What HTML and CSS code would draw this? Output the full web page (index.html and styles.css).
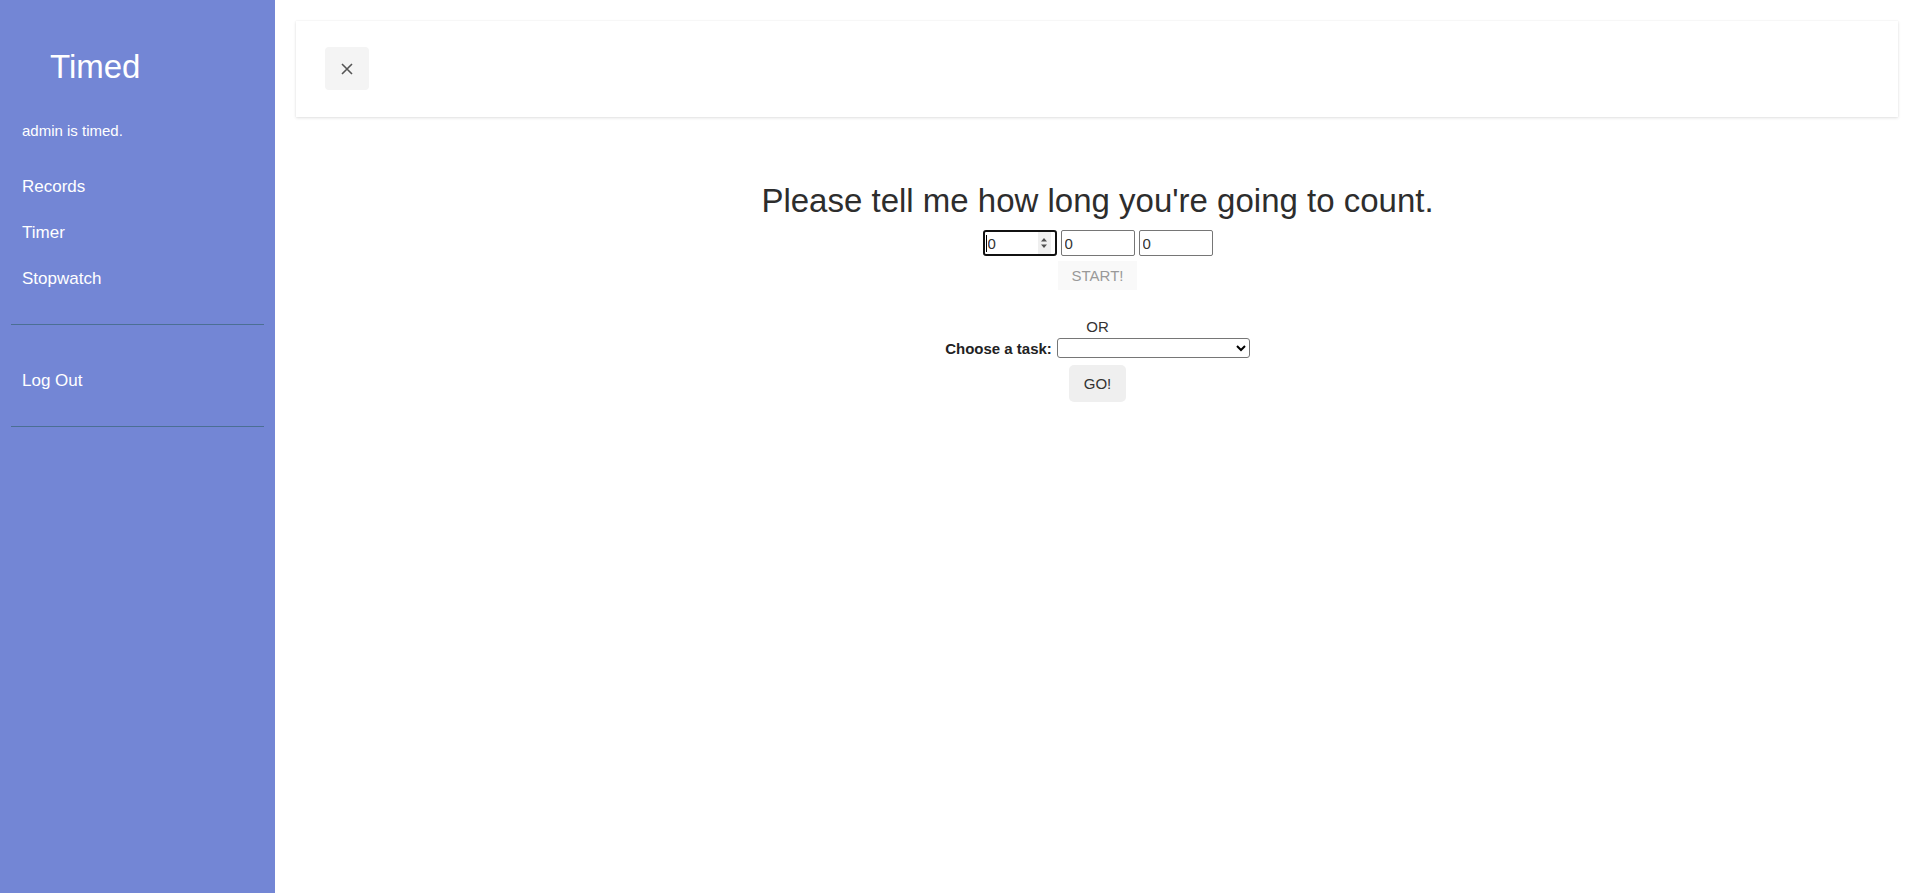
FILE: index.html
```html
<!DOCTYPE html>
<html lang="en">
<head>
<meta charset="utf-8">
<title>Timed</title>
<link rel="stylesheet" href="styles.css">
</head>
<body>
<div class="wrapper">
  <nav class="sidebar">
    <div class="sidebar-header">
      <h3 class="brand">Timed</h3>
    </div>
    <p class="user">admin is timed.</p>
    <ul class="components">
      <li><a href="#">Records</a></li>
      <li><a href="#">Timer</a></li>
      <li><a href="#">Stopwatch</a></li>
    </ul>
    <ul class="components second">
      <li><a href="#">Log Out</a></li>
    </ul>
  </nav>
  <main class="content">
    <div class="navbar">
      <button class="close-btn" type="button" aria-label="Close">
        <svg width="12" height="12" viewBox="0 0 12 12"><path d="M1 1 L11 11 M11 1 L1 11" stroke="#555" stroke-width="1.6" fill="none"/></svg>
      </button>
    </div>
    <section class="timer">
      <h1 class="title">Please tell me how long you're going to count.</h1>
      <div class="inputs">
        <div class="field focused">
          <input class="num" type="text" value="0">
          <span class="caret"></span>
          <span class="spinner">
            <svg width="8" height="14" viewBox="0 0 8 14"><path d="M4 2 L7 5.5 H1 Z M4 12 L7 8.5 H1 Z" fill="#505050"/></svg>
          </span>
        </div>
        <div class="field"><input class="num" type="text" value="0"></div>
        <div class="field"><input class="num" type="text" value="0"></div>
      </div>
      <button class="btn start" type="button" disabled>START!</button>
      <div class="or">OR</div>
      <div class="task-row">
        <label class="task-label" for="task">Choose a task:</label>
        <select id="task" class="task-select"><option value=""></option></select>
      </div>
      <button class="btn go" type="button">GO!</button>
    </section>
  </main>
</div>
</body>
</html>
```

FILE: styles.css
```css
* { box-sizing: border-box; }

html, body {
  margin: 0;
  padding: 0;
  background: #fff;
}

body {
  font-family: "Liberation Sans", Arial, sans-serif;
  color: #333;
}

.wrapper {
  display: flex;
  min-height: 100vh;
}

/* Sidebar */
.sidebar {
  width: 275px;
  flex: 0 0 275px;
  background: #7386d5;
  color: #fff;
}

.sidebar-header {
  padding: 48px 0 0 50px;
}

.brand {
  margin: 0;
  font-size: 33px;
  line-height: 37px;
  font-weight: normal;
}

.user {
  margin: 37px 0 0 22px;
  font-size: 15px;
  line-height: 17px;
}

.components {
  list-style: none;
  margin: 0 11px;
  padding: 25px 0 22px;
  border-bottom: 1px solid #4b6f94;
}

.components.second {
  padding: 33px 0 22px;
}

.components a {
  display: block;
  padding: 10px 10px 10px 11px;
  font-size: 17px;
  line-height: 26px;
  color: #fff;
  text-decoration: none;
}

/* Content */
.content {
  flex: 1;
  min-width: 0;
}

.navbar {
  margin: 21px 22px 0 21px;
  height: 96px;
  padding: 26px 29px;
  background: #fff;
  box-shadow: 0 1px 3px rgba(0, 0, 0, 0.12), 0 0 1px rgba(0, 0, 0, 0.08);
}

.close-btn {
  width: 44px;
  height: 43px;
  border: none;
  border-radius: 4px;
  background: #f4f4f4;
  display: flex;
  align-items: center;
  justify-content: center;
  padding: 0;
}

.timer {
  display: flex;
  flex-direction: column;
  align-items: center;
  padding-top: 65px;
}

.title {
  margin: 0;
  font-size: 33px;
  line-height: 38px;
  font-weight: normal;
  color: #2d2d2d;
}

.inputs {
  display: flex;
  gap: 4px;
  margin-top: 10px;
}

.field {
  position: relative;
}

.num {
  display: block;
  width: 74px;
  height: 26px;
  margin: 0;
  padding: 1px 3px;
  border: 1px solid #767676;
  border-radius: 2px;
  font-family: "Liberation Sans", Arial, sans-serif;
  font-size: 15px;
  color: #333;
  background: #fff;
  outline: none;
}

.field.focused .num {
  border: 2px solid #111;
  border-radius: 3px;
  padding: 0 2px 0 3px;
}

.caret {
  position: absolute;
  left: 3px;
  top: 5px;
  width: 1px;
  height: 17px;
  background: #000;
}

.spinner {
  position: absolute;
  right: 6px;
  top: 2px;
  width: 13px;
  height: 22px;
  background: #efefef;
  display: flex;
  align-items: center;
  justify-content: center;
}

.btn {
  font-family: "Liberation Sans", Arial, sans-serif;
  font-size: 15px;
  line-height: 17px;
  border: none;
  margin: 0;
}

.start {
  margin-top: 5px;
  padding: 6px 14px;
  background: #f9f9f9;
  color: #999;
}

.or {
  margin-top: 28px;
  font-size: 15px;
  line-height: 17px;
  color: #333;
}

.task-row {
  display: flex;
  align-items: center;
  gap: 5px;
  margin-top: 3px;
  height: 20px;
}

.task-label {
  font-size: 15px;
  line-height: 17px;
  font-weight: bold;
  color: #222;
}

.task-select {
  width: 193px;
  height: 20px;
  margin: 0;
  border: 1px solid #767676;
  border-radius: 3px;
  background: #fff;
  font-family: "Liberation Sans", Arial, sans-serif;
  font-size: 13px;
}

.go {
  margin-top: 7px;
  padding: 10px 15px;
  background: #efefef;
  border-radius: 5px;
  color: #333;
}
```
